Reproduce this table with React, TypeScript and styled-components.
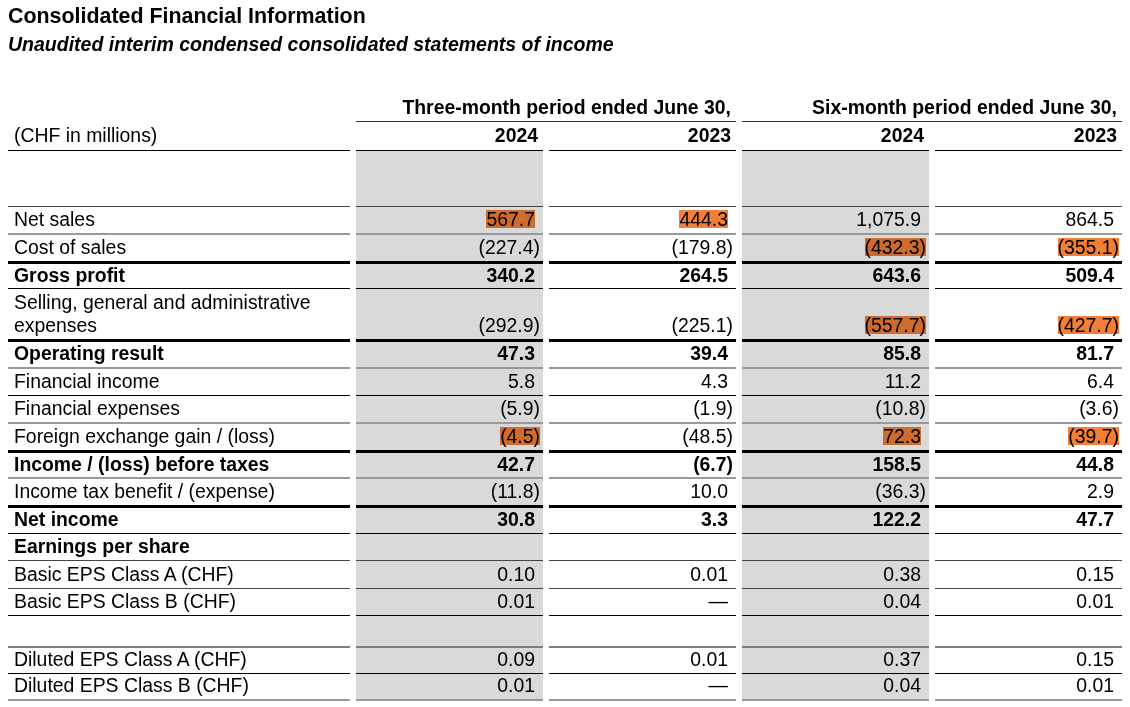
import React from 'react';
import styled, { createGlobalStyle } from 'styled-components';

const GlobalStyle = createGlobalStyle`
  html, body { margin: 0; padding: 0; background: #ffffff; }
  body {
    font-family: "Liberation Sans", Arial, Helvetica, sans-serif;
    color: #000000;
  }
`;

type Rule = 'none' | 'black' | 'dark' | 'gray' | 'wide' | 'thick';

const RULES: Record<Rule, string> = {
  none: 'none',
  black: '1px solid #000000',
  dark: '1px solid #444444',
  gray: '2px solid #999999',
  wide: '2px solid #7d7d7d',
  thick: '3px solid #000000',
};

const Page = styled.div`
  width: 1130px;
  box-sizing: border-box;
  padding: 3px 8px 0;
`;

const Title = styled.h1`
  margin: 0;
  font-size: 21.4px;
  line-height: 26px;
  font-weight: 700;
`;

const Subtitle = styled.h2`
  margin: 3px 0 0;
  font-size: 19.5px;
  line-height: 24px;
  font-weight: 700;
  font-style: italic;
`;

const Table = styled.div`
  margin-top: 36px;
  font-size: 19.4px;
`;

const Row = styled.div<{ $h: number }>`
  display: grid;
  grid-template-columns: 342px repeat(4, 1fr);
  column-gap: 6px;
  height: ${(p) => p.$h}px;
`;

const Cell = styled.div<{ $rule: Rule; $shaded?: boolean; $bold?: boolean; $close?: boolean }>`
  box-sizing: border-box;
  display: flex;
  flex-direction: column;
  justify-content: flex-end;
  border-top: ${(p) => RULES[p.$rule]};
  border-bottom: ${(p) => (p.$close ? RULES.gray : 'none')};
  background: ${(p) => (p.$shaded ? '#d9d9d9' : 'transparent')};
  font-weight: ${(p) => (p.$bold ? 700 : 400)};
  padding-bottom: 2px;
  min-width: 0;
`;

const LabelCell = styled(Cell)`
  padding-left: 6px;
`;

const ValueCell = styled(Cell)`
  padding-right: 3px;
  text-align: right;
`;

const Line = styled.span`
  display: block;
  line-height: 23px;
  white-space: normal;
`;

const Mark = styled.span`
  display: inline-block;
  line-height: 18px;
  background: #f27f35;
  mix-blend-mode: multiply;
`;

const ParenGap = styled.span`
  display: inline-block;
  width: 5px;
`;

const PeriodCell = styled.div`
  grid-column: span 2;
  box-sizing: border-box;
  display: flex;
  align-items: flex-end;
  justify-content: flex-end;
  border-bottom: 1px solid #333333;
  padding: 0 5px 2px 0;
  font-weight: 700;
  line-height: 23px;
`;

const YearCell = styled.div<{ $label?: boolean }>`
  box-sizing: border-box;
  display: flex;
  align-items: flex-end;
  justify-content: ${(p) => (p.$label ? 'flex-start' : 'flex-end')};
  border-bottom: 1px solid #000000;
  padding: ${(p) => (p.$label ? '0 0 3px 6px' : '0 5px 3px 0')};
  font-weight: ${(p) => (p.$label ? 400 : 700)};
  line-height: 23px;
`;

const BlankCell = styled.div<{ $shaded?: boolean }>`
  background: ${(p) => (p.$shaded ? '#d9d9d9' : 'transparent')};
`;

type Val = { v: string; hl?: boolean };
type DataRow = {
  label: string;
  rule: Rule;
  bold?: boolean;
  labelOnlyBold?: boolean;
  h?: number;
  values?: Val[];
  close?: boolean;
};

const v = (s: string, hl = false): Val => ({ v: s, hl });

const ROWS: DataRow[] = [
  { label: 'Net sales', rule: 'dark', values: [v('567.7', true), v('444.3', true), v('1,075.9'), v('864.5')] },
  { label: 'Cost of sales', rule: 'gray', values: [v('(227.4)'), v('(179.8)'), v('(432.3)', true), v('(355.1)', true)] },
  { label: 'Gross profit', rule: 'thick', bold: true, values: [v('340.2'), v('264.5'), v('643.6'), v('509.4')] },
  {
    label: 'Selling, general and administrative expenses',
    rule: 'black',
    h: 51,
    values: [v('(292.9)'), v('(225.1)'), v('(557.7)', true), v('(427.7)', true)],
  },
  { label: 'Operating result', rule: 'thick', bold: true, values: [v('47.3'), v('39.4'), v('85.8'), v('81.7')] },
  { label: 'Financial income', rule: 'gray', values: [v('5.8'), v('4.3'), v('11.2'), v('6.4')] },
  { label: 'Financial expenses', rule: 'black', values: [v('(5.9)'), v('(1.9)'), v('(10.8)'), v('(3.6)')] },
  { label: 'Foreign exchange gain / (loss)', rule: 'gray', values: [v('(4.5)', true), v('(48.5)'), v('72.3', true), v('(39.7)', true)] },
  { label: 'Income / (loss) before taxes', rule: 'thick', bold: true, values: [v('42.7'), v('(6.7)'), v('158.5'), v('44.8')] },
  { label: 'Income tax benefit / (expense)', rule: 'gray', values: [v('(11.8)'), v('10.0'), v('(36.3)'), v('2.9')] },
  { label: 'Net income', rule: 'thick', bold: true, values: [v('30.8'), v('3.3'), v('122.2'), v('47.7')] },
  { label: 'Earnings per share', rule: 'black', labelOnlyBold: true },
  { label: 'Basic EPS Class A (CHF)', rule: 'dark', values: [v('0.10'), v('0.01'), v('0.38'), v('0.15')] },
  { label: 'Basic EPS Class B (CHF)', rule: 'dark', values: [v('0.01'), v('—'), v('0.04'), v('0.01')] },
  { label: '', rule: 'black', h: 30.4 },
  { label: 'Diluted EPS Class A (CHF)', rule: 'wide', values: [v('0.09'), v('0.01'), v('0.37'), v('0.15')] },
  { label: 'Diluted EPS Class B (CHF)', rule: 'black', values: [v('0.01'), v('—'), v('0.04'), v('0.01')], close: true },
];

const SHADED = [true, false, true, false];

function Amount({ val }: { val: Val }) {
  const closes = val.v.endsWith(')');
  return (
    <Line>
      {val.hl ? <Mark>{val.v}</Mark> : <span>{val.v}</span>}
      {!closes && <ParenGap />}
    </Line>
  );
}

export default function App() {
  return (
    <>
      <GlobalStyle />
      <Page>
        <Title>Consolidated Financial Information</Title>
        <Subtitle>Unaudited interim condensed consolidated statements of income</Subtitle>
        <Table>
          <Row $h={30}>
            <div />
            <PeriodCell>Three-month period ended June 30,</PeriodCell>
            <PeriodCell>Six-month period ended June 30,</PeriodCell>
          </Row>
          <Row $h={29}>
            <YearCell $label>(CHF in millions)</YearCell>
            <YearCell>2024</YearCell>
            <YearCell>2023</YearCell>
            <YearCell>2024</YearCell>
            <YearCell>2023</YearCell>
          </Row>
          <Row $h={54.7}>
            <BlankCell />
            {SHADED.map((s, i) => (
              <BlankCell key={i} $shaded={s} />
            ))}
          </Row>
          {ROWS.map((r, idx) => (
            <Row key={idx} $h={r.h ?? 27.6}>
              <LabelCell $rule={r.rule} $bold={r.bold || r.labelOnlyBold} $close={r.close}>
                <Line>{r.label}</Line>
              </LabelCell>
              {SHADED.map((s, i) => (
                <ValueCell key={i} $rule={r.rule} $shaded={s} $bold={r.bold} $close={r.close}>
                  {r.values ? <Amount val={r.values[i]} /> : null}
                </ValueCell>
              ))}
            </Row>
          ))}
        </Table>
      </Page>
    </>
  );
}
